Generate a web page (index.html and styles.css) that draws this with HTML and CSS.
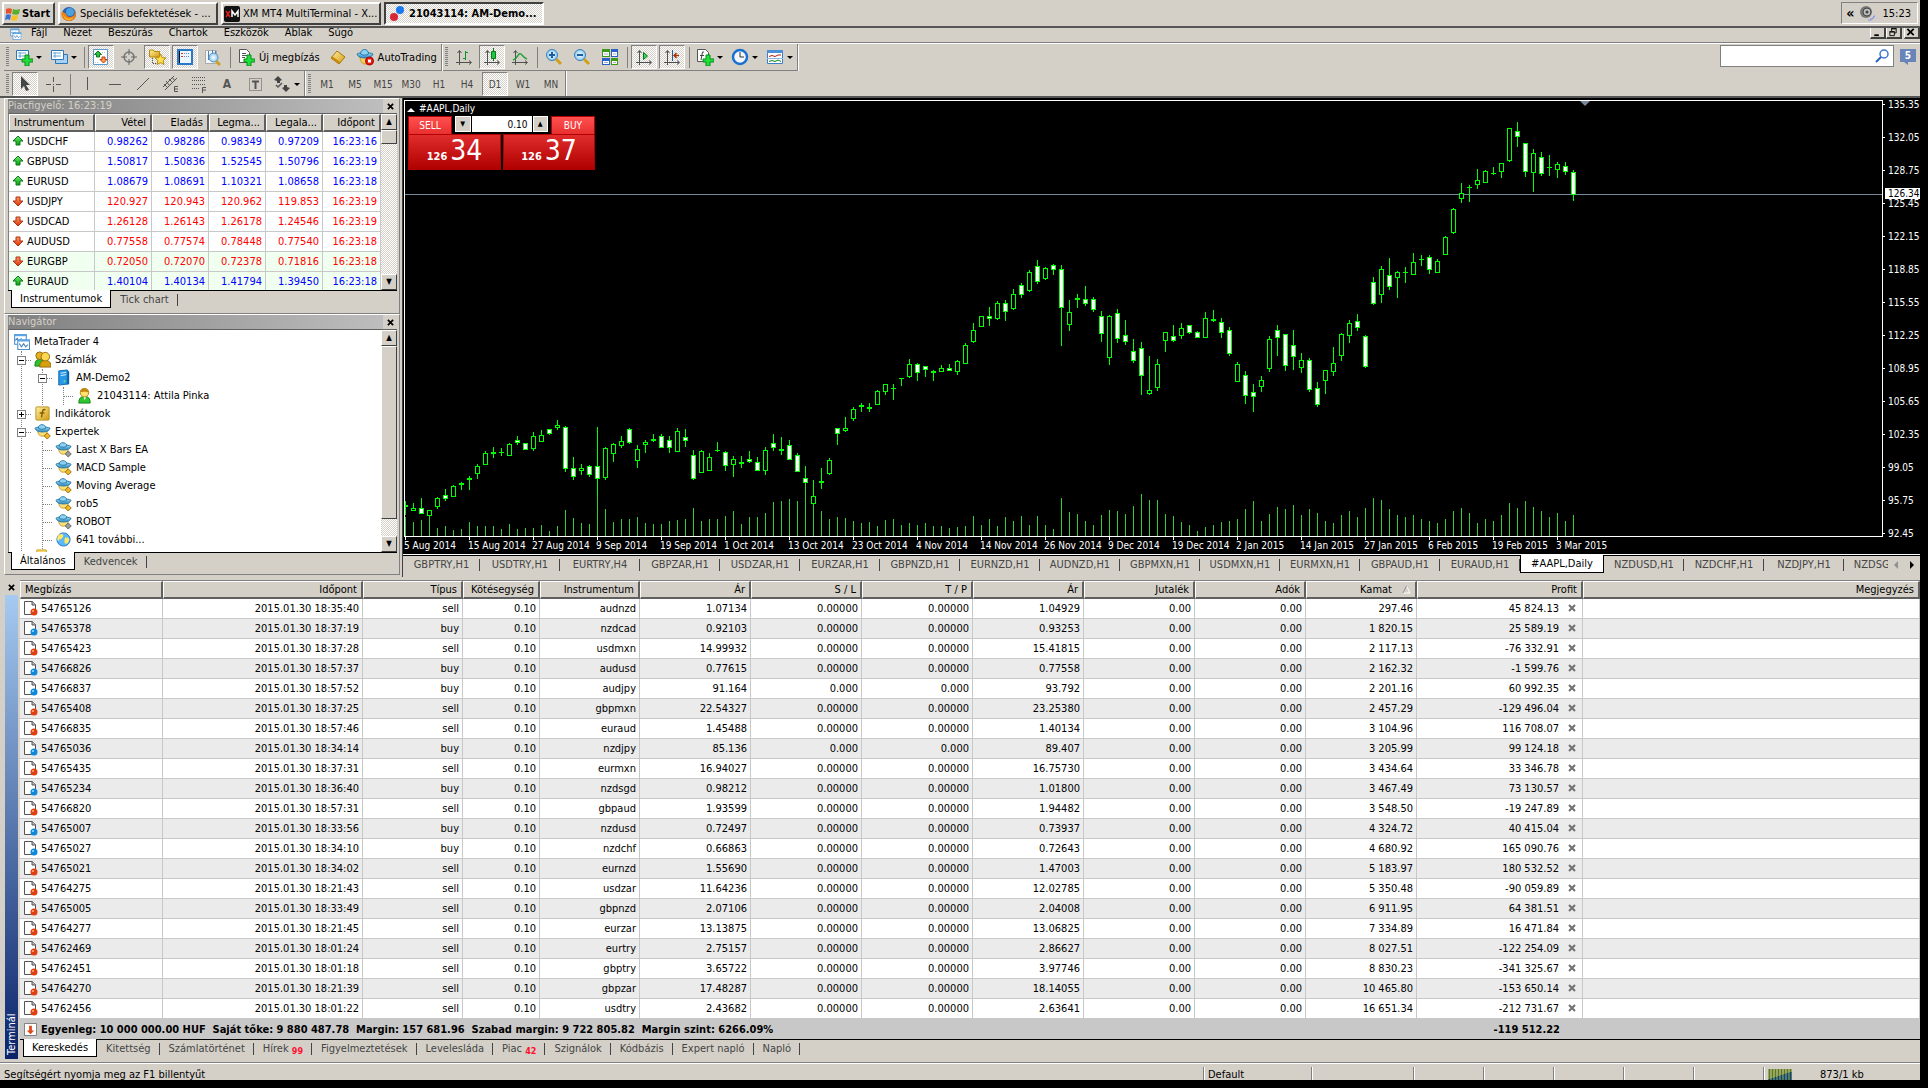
FILE: index.html
```
<!DOCTYPE html>
<html lang="hu">
<head>
  <meta charset="UTF-8">
  <meta name="viewport" content="width=device-width, initial-scale=1.0">
  <title>21043114: AM-Demo2 - MetaTrader 4</title>
  <link rel="stylesheet" href="styles.css">
</head>
<body>

  <!-- Shared icons -->
  <svg class="sprite" aria-hidden="true">
    <defs>
      <linearGradient id="g-hat" x1="0" y1="0" x2="0" y2="1"><stop offset="0" stop-color="#9fdcf8"/><stop offset="1" stop-color="#2a86bd"/></linearGradient>
      <linearGradient id="g-gold" x1="0" y1="0" x2="1" y2="1"><stop offset="0" stop-color="#fff0a0"/><stop offset="1" stop-color="#d49a10"/></linearGradient>
      <linearGradient id="g-green" x1="0" y1="0" x2="0" y2="1"><stop offset="0" stop-color="#6ff06f"/><stop offset="1" stop-color="#0a9a0a"/></linearGradient>
      <linearGradient id="g-red" x1="0" y1="0" x2="0" y2="1"><stop offset="0" stop-color="#ff9a6a"/><stop offset="1" stop-color="#d83000"/></linearGradient>
      <radialGradient id="g-lens"><stop offset="0" stop-color="#ffffff"/><stop offset="1" stop-color="#8cc8f0"/></radialGradient>
    </defs>
    <symbol id="i-x" viewBox="0 0 8 8"><path d="M1 1l6 6M7 1L1 7" stroke="currentColor" stroke-width="2"/></symbol>
    <symbol id="i-up" viewBox="0 0 12 12"><path d="M6 1l5 5H8v4H4V6H1z" fill="url(#g-green)" stroke="#0a7a1e"/></symbol>
    <symbol id="i-down" viewBox="0 0 12 12"><path d="M6 11L1 6h3V2h4v4h3z" fill="url(#g-red)" stroke="#b03010"/></symbol>
    <symbol id="i-windows" viewBox="0 0 16 16"><path d="M1.500 1.500h11v9h-11z" fill="#fff" stroke="#4a90d0"/><path d="M1 1h12v2H1z" fill="#5ca4e4"/><path d="M2 7l2-2 2 3 2-3" fill="none" stroke="#4a80c0"/><path d="M4.500 6.500h11v9h-11z" fill="#fff" stroke="#4a90d0"/><path d="M4 6h12v2H4z" fill="#5ca4e4"/><path d="M6 10l2 3 2-3 2 3 2-2" fill="none" stroke="#4a80c0"/></symbol>
    <symbol id="i-sell" viewBox="0 0 16 16"><path d="M1.500 1.500h8l3 3v10h-11z" fill="#fff" stroke="#555"/><path d="M9 1v4h4" fill="#bbb" stroke="#555"/><circle cx="11" cy="12" r="3.500" fill="#e04010"/><circle cx="10" cy="11" r="1" fill="#ffb090"/></symbol>
    <symbol id="i-buy" viewBox="0 0 16 16"><path d="M1.500 1.500h8l3 3v10h-11z" fill="#fff" stroke="#555"/><path d="M9 1v4h4" fill="#bbb" stroke="#555"/><circle cx="11" cy="12" r="3.500" fill="#1088d8"/><circle cx="10" cy="11" r="1" fill="#a0e0ff"/></symbol>
    <symbol id="i-head" viewBox="0 0 18 18"><path d="M4 8h10c0 4-2 6-5 6s-5-2-5-6z" fill="#fbe07a" stroke="#c89820"/><path d="M1 5.500c3-2 12-2 16 0-1 3-4 4-8 4s-7-1-8-4z" fill="url(#g-hat)" stroke="#2a7aa8"/><path d="M4.500 5.500C4.500.500 12.500.500 12.500 5.500c-2 1.500-6 1.500-8 0z" fill="#8cd0f4" stroke="#2a7aa8"/></symbol>
    <symbol id="i-expert" viewBox="0 0 18 18"><use href="#i-head"/><path d="M14 10.500l3.200 3.200L14 17l-3.200-3.300z" fill="#f0b828" stroke="#9a7008"/></symbol>
    <symbol id="i-expert-off" viewBox="0 0 18 18"><use href="#i-head"/><path d="M14 10.500l3.200 3.200L14 17l-3.200-3.300z" fill="#999" stroke="#666"/></symbol>
    <symbol id="i-user" viewBox="0 0 18 18"><path d="M3 17c0-5 2-7 6-7s6 2 6 7z" fill="#30c830" stroke="#108010"/><path d="M8 10l1 4 2-4z" fill="#fff"/><circle cx="9" cy="6" r="4.500" fill="#ffe070" stroke="#b88010"/><path d="M4.500 5c0-5 9-5 9 1-3-2-6 0-9-1z" fill="#c08810"/></symbol>
    <symbol id="i-plus" viewBox="0 0 18 18"><path d="M10 7h4v4h4v3h-4v4h-4v-4H7v-3h3z" fill="#1ee03a" stroke="#0a8a1a"/></symbol>
    <symbol id="i-axes" viewBox="0 0 18 18"><path d="M4.500 17V3M1 14.500h15M2.500 5l2-2.500 2 2.500M14 12.500l2.500 2-2.500 2" fill="none" stroke="#505050"/></symbol>
  </svg>

  <header class="taskbar">
    <button class="start"><svg viewBox="0 0 16 16"><path d="M1 3c2-1 4-1 6 0L6 8c-2-1-4-1-5 0z" fill="#e8502a"/><path d="M8 3c2 1 4 1 7 0l-1 5c-2 1-4 1-7 0z" fill="#58b030"/><path d="M1 9c1-1 3-1 5 0l-1 5c-2-1-3-1-5 0z" fill="#3a70d8"/><path d="M7 9c2 1 4 1 6 0l-1 5c-2 1-4 1-6 0z" fill="#f8c020"/></svg>Start</button>
    <button class="task"><svg viewBox="0 0 16 16"><circle cx="8" cy="8" r="7" fill="#2a60b0"/><circle cx="9" cy="6" r="4" fill="#4aa0e0"/><path d="M1 5c1 2 3 1 4 3 1 3 4 4 7 2 2-1 2-4 1-6 4 5 1 11-5 11S-1 10 1 5z" fill="#f08010"/><path d="M2 8c2 5 7 6 11 3-3 5-10 4-11-3z" fill="#f8b830"/></svg><span>Speciális befektetések - ...</span></button>
    <button class="task"><svg viewBox="0 0 16 16"><rect width="16" height="16" rx="2" fill="#111"/><path d="M2 5l4 6M6 5l-4 6" stroke="#e02020" stroke-width="1.500"/><path d="M8 11V5l3 4 3-4v6" fill="none" stroke="#fff" stroke-width="1.500"/></svg><span>XM MT4 MultiTerminal - X...</span></button>
    <button class="task active"><svg viewBox="0 0 16 16"><circle cx="10" cy="4" r="4" fill="#1a78f0"/><circle cx="4" cy="11" r="4" fill="#d82838"/></svg><span>21043114: AM-Demo...</span></button>
    <div class="tray"><span>«</span><svg viewBox="0 0 16 16"><circle cx="7" cy="7" r="6" fill="#777"/><circle cx="8" cy="7" r="4" fill="#bbb" stroke="#444"/><circle cx="8" cy="7" r="1.500" fill="#444"/><path d="M11 14c2 0 3-1 4-3M9 15c4 1 6-2 7-5" fill="none" stroke="#8890e8"/></svg><time>15:23</time></div>
  </header>

  <nav class="menubar">
    <svg viewBox="0 0 16 16"><use href="#i-windows"/></svg>
    <a href="#">Fájl</a><a href="#">Nézet</a><a href="#">Beszúrás</a><a href="#">Chartok</a><a href="#">Eszközök</a><a href="#">Ablak</a><a href="#">Súgó</a>
    <div class="winbtns">
      <button aria-label="Kis méret"><svg viewBox="0 0 12 10"><path d="M3 7h5v2H3z"/></svg></button>
      <button aria-label="Előző méret"><svg viewBox="0 0 12 10"><path d="M4.500 3.500v-3h5v5h-2M2.500 4.500h5v4h-5zM4 1h6M2 4h6" fill="none" stroke="#000"/></svg></button>
      <button class="close" aria-label="Bezárás"><svg viewBox="0 0 12 10"><path d="M2 1l7 7M9 1L2 8" stroke="#000" stroke-width="2"/></svg></button>
    </div>
  </nav>

  <div class="toolrow">
    <div class="toolbar">
      <i class="grip"></i>
      <button class="tool drop" aria-label="Új chart"><svg viewBox="0 0 18 18"><path d="M1.500 2.500h12v9h-12z" fill="#fff" stroke="#2a78b8"/><path d="M3 5h8M5 4v6M3 8h8" stroke="#68a8d8"/><use href="#i-plus"/></svg></button>
      <button class="tool drop" aria-label="Profilok"><svg viewBox="0 0 18 18"><path d="M5.500 6.500h12v9h-12z" fill="#a8d0f0" stroke="#2a78b8"/><path d="M1.500 2.500h12v9h-12z" fill="#fff" stroke="#2a78b8"/><path d="M3 5h8M5 4v6M3 8h8" stroke="#68a8d8"/></svg></button>
      <i class="sep"></i>
      <button class="tool on" aria-label="Piacfigyelő"><svg viewBox="0 0 18 18"><path d="M1.500 1.500h14v15h-14z" fill="#fff" stroke="#5a9ad0"/><path d="M3 14.500h4M10 4.500h4" stroke="#a8c8e8" stroke-dasharray="1 1"/><path d="M6 3l3.500 3.500H7.500V9h-3V6.500h-2z" fill="#30c040" stroke="#087a18"/><path d="M11.500 15L8 11.500h2V9h3v2.500h2z" fill="#f8a050" stroke="#c03808"/></svg></button>
      <button class="tool" aria-label="Adatablak"><svg viewBox="0 0 18 18"><circle cx="9" cy="9" r="5" fill="none" stroke="#777" stroke-width="1.500"/><path d="M9 1v6M9 11v6M1 9h6M11 9h6" stroke="#666"/></svg></button>
      <button class="tool on" aria-label="Navigátor"><svg viewBox="0 0 18 18"><path d="M1.500 2h4l1 1.500h5V9h-10z" fill="url(#g-gold)" stroke="#b88808"/><path d="M4.500 10v6M5 15.500h4" stroke="#555" stroke-dasharray="1 1"/><path d="M12.500 6l1.700 3.600 3.800.4-2.800 2.600.8 4-3.500-2-3.500 2 .8-4L7 10l3.800-.4z" fill="#ffe050" stroke="#b88808"/></svg></button>
      <button class="tool on" aria-label="Terminál"><svg viewBox="0 0 18 18"><path d="M2 2h14v14H2z" fill="#eef6ff" stroke="#2a78c8" stroke-width="2"/><path d="M3 3h1v12H3z" fill="#111"/><path d="M5 5.500h2M5 8.500h2" stroke="#e03010"/><path d="M8 5.500h6M8 8.500h6" stroke="#5a8ac8" stroke-dasharray="1 1"/></svg></button>
      <button class="tool" aria-label="Stratégia teszter"><svg viewBox="0 0 18 18"><path d="M1.500 2.500h11v13h-11z" fill="#f4f8fc" stroke="#aaa"/><path d="M4.500 3v9M8.500 2v9M11.500 3v6" stroke="#4a80b0"/><path d="M12 13l4 4" stroke="#d0a020" stroke-width="3"/><circle cx="9.500" cy="9.500" r="4.500" fill="url(#g-lens)" stroke="#5a90b8"/></svg></button>
      <i class="sep"></i>
      <button class="tool wide"><svg viewBox="0 0 18 18"><path d="M2.500 1.500h7l3 3v10h-10z" fill="#fff" stroke="#555"/><path d="M5 5.500h4M5 7.500h5M5 9.500h3" stroke="#555"/><use href="#i-plus"/></svg>Új megbízás</button>
      <button class="tool" aria-label="MetaEditor"><svg viewBox="0 0 18 18"><path d="M2 10l6-7 8 6-6 7z" fill="url(#g-gold)" stroke="#a87808"/><path d="M2 10l8 6 1-2-8-6z" fill="#c88810"/></svg></button>
      <button class="tool wide"><svg viewBox="0 0 18 18"><path d="M4 8h10c0 5-2 8-5 8s-5-3-5-8z" fill="#f8d060" stroke="#c89820"/><path d="M1 6c3-2 12-2 16 0-1 3-4 4-8 4s-7-1-8-4z" fill="url(#g-hat)" stroke="#2a7aa8"/><path d="M4.500 6c0-6 8-6 8 0-2 1.500-6 1.500-8 0z" fill="#8cd0f4" stroke="#2a7aa8"/><circle cx="13.500" cy="13" r="4" fill="#e02010" stroke="#a00"/><path d="M12 11.500h3v3h-3z" fill="#fff"/></svg>AutoTrading</button>
    </div>
    <div class="toolbar">
      <i class="grip"></i>
      <button class="tool" aria-label="Oszlop chart"><svg viewBox="0 0 18 18"><use href="#i-axes"/><path d="M10.500 3v9M8 10.500h2M11 4.500h2" stroke="#109030"/></svg></button>
      <button class="tool on" aria-label="Gyertya chart"><svg viewBox="0 0 18 18"><use href="#i-axes"/><path d="M10.500 0v13" stroke="#087a18"/><path d="M8.500 3.500h4v7h-4z" fill="#20c840" stroke="#087a18"/></svg></button>
      <button class="tool" aria-label="Vonal chart"><svg viewBox="0 0 18 18"><use href="#i-axes"/><path d="M2 12c5-1 5-8 8-6 2 2 3 4 6 5" fill="none" stroke="#20a038" stroke-width="1.500"/></svg></button>
      <i class="sep"></i>
      <button class="tool" aria-label="Nagyítás"><svg viewBox="0 0 18 18"><path d="M11 11l5 5" stroke="#d0a018" stroke-width="3"/><circle cx="7" cy="7" r="5.500" fill="url(#g-lens)" stroke="#3a80b8"/><path d="M4 7h6M7 4v6" stroke="#1a60a0" stroke-width="2"/></svg></button>
      <button class="tool" aria-label="Kicsinyítés"><svg viewBox="0 0 18 18"><path d="M11 11l5 5" stroke="#d0a018" stroke-width="3"/><circle cx="7" cy="7" r="5.500" fill="url(#g-lens)" stroke="#3a80b8"/><path d="M4 7h6" stroke="#1a60a0" stroke-width="2"/></svg></button>
      <button class="tool" aria-label="Mozaik"><svg viewBox="0 0 18 18"><path d="M1 1h8v8H1zM10 10h7v7h-7z" fill="#3a9a18"/><path d="M10 1h7v8h-7zM1 10h8v7H1z" fill="#2a60c8"/><path d="M2 4h6v4H2zM11 4h5v4h-5zM2 13h6v3H2zM11 13h5v3h-5z" fill="#fff"/><path d="M3 6h4M12 6h3M3 14.500h4M12 14.500h3" stroke="#aac"/></svg></button>
      <i class="sep"></i>
      <button class="tool on" aria-label="Automatikus görgetés"><svg viewBox="0 0 18 18"><use href="#i-axes"/><path d="M8.500 4.500l4 3.500-4 3.500z" fill="#40d050" stroke="#087a18"/></svg></button>
      <button class="tool on" aria-label="Chart eltolás"><svg viewBox="0 0 18 18"><use href="#i-axes"/><path d="M9.500 2v11" stroke="#2060a0"/><path d="M16 7.500h-5M13.500 5L11 7.500l2.500 2.500" fill="none" stroke="#b03008" stroke-width="1.500"/></svg></button>
      <i class="sep"></i>
      <button class="tool drop" aria-label="Indikátorok"><svg viewBox="0 0 18 18"><path d="M1.500 1.500h8l3 3v9h-11z" fill="#fff" stroke="#555"/><path d="M8 4H6.500L5 12M4 7.500h4" fill="none" stroke="#444"/><use href="#i-plus"/></svg></button>
      <button class="tool drop" aria-label="Időszakok"><svg viewBox="0 0 18 18"><circle cx="9" cy="9" r="7" fill="#f4f8fc" stroke="#1a70d0" stroke-width="2.500"/><path d="M9 4v5h4" fill="none" stroke="#333"/></svg></button>
      <button class="tool drop" aria-label="Sablonok"><svg viewBox="0 0 18 18"><path d="M1.500 2.500h15v13h-15z" fill="#fff" stroke="#3a80c8"/><path d="M1 2h16v3H1z" fill="#4a90d8"/><path d="M3 8.500l3-1 3 1 3-1.500h3" fill="none" stroke="#b02010"/><path d="M1 10.500h16" stroke="#88b8e8"/><path d="M3 13.500l3-1 3 1 3-1.500 3 1.500" fill="none" stroke="#108020"/></svg></button>
    </div>
    <div class="search">
      <input type="search" aria-label="Keresés">
      <svg viewBox="0 0 14 14"><circle cx="9" cy="5" r="4" fill="#fff" stroke="#3a78d0" stroke-width="1.500"/><path d="M6 8l-5 5" stroke="#2a60c0" stroke-width="2"/></svg>
    </div>
    <button class="mail" aria-label="Üzenetek">5</button>
  </div>

  <div class="toolrow second">
    <div class="toolbar">
      <i class="grip"></i>
      <button class="tool on" aria-label="Kurzor"><svg viewBox="0 0 18 18"><path d="M5 1v13l3-3 2 5 3-1-3-5h4z" fill="#444"/></svg></button>
      <button class="tool" aria-label="Szálkereszt"><svg viewBox="0 0 18 18"><path d="M9.500 2v5M9.500 11v6M2 9.500h5M12 9.500h5M9 9.500h1" stroke="#555"/></svg></button>
      <i class="sep"></i>
      <button class="tool" aria-label="Függőleges vonal"><svg viewBox="0 0 18 18"><path d="M9.500 2v13" stroke="#555"/></svg></button>
      <button class="tool" aria-label="Vízszintes vonal"><svg viewBox="0 0 18 18"><path d="M3 9.500h12" stroke="#555"/></svg></button>
      <button class="tool" aria-label="Trendvonal"><svg viewBox="0 0 18 18"><path d="M3 15L15 3" stroke="#555"/></svg></button>
      <button class="tool" aria-label="Csatorna"><svg viewBox="0 0 18 18"><path d="M1 12L12 1M3 15L15 3M2 9l4 4M4 6l4 5M7 4l4 4M10 2l3 4" stroke="#555"/><path d="M16 11.500h-3.500v5H16M13 14h3" fill="none" stroke="#555"/></svg></button>
      <button class="tool" aria-label="Fibonacci"><svg viewBox="0 0 18 18"><path d="M2 2.500h14M2 5.500h14M2 9.500h14M2 13.500h8" stroke="#555" stroke-dasharray="1 1"/><path d="M16 12.500h-3.500V18M13 15h3" fill="none" stroke="#555"/></svg></button>
      <button class="tool letter">A</button>
      <button class="tool" aria-label="Szövegcímke"><svg viewBox="0 0 18 18"><path d="M3.500 3.500h12v12h-12z" fill="none" stroke="#555" stroke-dasharray="1 1"/><path d="M6 6.500h7M9.500 6v8" stroke="#555" stroke-width="2"/></svg></button>
      <button class="tool drop" aria-label="Nyilak"><svg viewBox="0 0 18 18"><path d="M5 1l4 4-2 1v2H4V6L1 5zM13 17l-4-4 2-1v-2h3v2l3 1z" fill="#444"/><path d="M3 10l2 2 4-4" fill="none" stroke="#555" stroke-width="1.500"/></svg></button>
    </div>
    <div class="toolbar">
      <i class="grip"></i>
      <button class="tool tf">M1</button><button class="tool tf">M5</button><button class="tool tf">M15</button><button class="tool tf">M30</button><button class="tool tf">H1</button><button class="tool tf">H4</button><button class="tool tf on">D1</button><button class="tool tf">W1</button><button class="tool tf">MN</button>
    </div>
  </div>

  <main class="workspace">
    <aside class="side">
      <section class="panel market">
        <h2>Piacfigyelő: 16:23:19 <button aria-label="Bezárás"><svg><use href="#i-x"/></svg></button></h2>
        <div class="view">
          <div class="clip">
            <table class="quotes">
              <thead><tr><th>Instrumentum</th><th>Vétel</th><th>Eladás</th><th>Legma...</th><th>Legala...</th><th>Időpont</th></tr></thead>
              <tbody id="quotes"></tbody>
            </table>
          </div>
          <div class="scroll"><button aria-label="Fel">▲</button><i class="thumb short"></i><button class="end" aria-label="Le">▼</button></div>
        </div>
        <div class="tabs"><button class="active">Instrumentumok</button><button>Tick chart</button></div>
      </section>

      <section class="panel navigator">
        <h2>Navigátor <button aria-label="Bezárás"><svg><use href="#i-x"/></svg></button></h2>
        <div class="view">
          <div class="clip">
            <ul class="tree">
              <li><svg viewBox="0 0 16 16"><use href="#i-windows"/></svg>MetaTrader 4
                <ul>
                  <li><b class="box"></b><svg viewBox="0 0 18 18"><path d="M1 16c0-5 1-7 5-7s5 3 5 7z" fill="#30c030" stroke="#108010"/><circle cx="6" cy="5" r="4" fill="#e8b020" stroke="#906808"/><path d="M6 17c0-5 2-7 6-7s6 2 6 7z" fill="#d8a010" stroke="#906808"/><circle cx="12" cy="6" r="4.500" fill="#ffd850" stroke="#906808"/></svg>Számlák
                    <ul><li><b class="box"></b><svg viewBox="0 0 18 18"><path d="M4 2l9-1v15l-9 1z" fill="#2a98e8" stroke="#1068b0"/><path d="M6 4.500l6-1M6 7l6-1" stroke="#d8f0ff"/><path d="M13 1l2 2v13l-2 1z" fill="#0a60a8"/><circle cx="10" cy="13" r="1" fill="#60f060"/></svg>AM-Demo2
                      <ul><li><svg viewBox="0 0 18 18"><use href="#i-user"/></svg>21043114: Attila Pinka</li></ul>
                    </li></ul>
                  </li>
                  <li><b class="box plus"></b><svg viewBox="0 0 18 18"><rect x="2" y="2" width="14" height="14" rx="1" fill="url(#g-gold)" stroke="#b89020"/><path d="M12 5c-3-1-3 1-4 8M6 8.500h5" fill="none" stroke="#806000" stroke-width="1.500"/></svg>Indikátorok</li>
                  <li><b class="box"></b><svg viewBox="0 0 18 18"><use href="#i-expert"/></svg>Expertek
                    <ul>
                      <li><svg viewBox="0 0 18 18"><use href="#i-expert-off"/></svg>Last X Bars EA</li>
                      <li><svg viewBox="0 0 18 18"><use href="#i-expert"/></svg>MACD Sample</li>
                      <li><svg viewBox="0 0 18 18"><use href="#i-expert"/></svg>Moving Average</li>
                      <li><svg viewBox="0 0 18 18"><use href="#i-expert"/></svg>rob5</li>
                      <li><svg viewBox="0 0 18 18"><use href="#i-expert-off"/></svg>ROBOT</li>
                      <li><svg viewBox="0 0 18 18"><circle cx="9" cy="9" r="7" fill="#58b8f8" stroke="#2a78c0"/><path d="M4 4c4-2 6 0 4 3s-3 1-4 3-3-3 0-6zM11 7c4-1 5 2 3 5s-4 1-4-1 0-3 1-4z" fill="#ffe860"/></svg>641 további...</li>
                    </ul>
                  </li>
                  <li class="more"><svg viewBox="0 0 18 18"><path d="M3 1h10v6H3z" fill="#f8d868" stroke="#c8a020"/></svg></li>
                </ul>
              </li>
            </ul>
          </div>
          <div class="scroll"><button aria-label="Fel">▲</button><i class="thumb long"></i><button class="end" aria-label="Le">▼</button></div>
        </div>
        <div class="tabs"><button class="active">Általános</button><button>Kedvencek</button></div>
      </section>
    </aside>

    <section class="charts">
      <div class="chart">
        <div class="plot">
          <svg id="plot" role="img" aria-label="#AAPL,Daily gyertya chart"></svg>
          <div class="symbol">#AAPL,Daily</div>
          <div class="oneclick">
            <button class="sell">SELL</button>
            <div class="lot"><button aria-label="Kevesebb">▼</button><input type="text" value="0.10" aria-label="Lot"><button aria-label="Több">▲</button></div>
            <button class="buy">BUY</button>
            <button class="price"><small>126</small>34</button>
            <button class="price"><small>126</small>37</button>
          </div>
        </div>
        <div class="scale" id="scale"><span class="bid">126.34</span></div>
        <div class="dates" id="dates"></div>
      </div>
      <div class="charttabs">
        <div class="list" id="charttabs"></div>
        <button class="arrow dim" aria-label="Balra"><svg viewBox="0 0 8 8"><path d="M6 0v8L2 4z"/></svg></button>
        <button class="arrow" aria-label="Jobbra"><svg viewBox="0 0 8 8"><path d="M2 0v8l4-4z"/></svg></button>
      </div>
    </section>
  </main>

  <section class="terminal">
    <div class="strip"><button aria-label="Bezárás"><svg><use href="#i-x"/></svg></button><span>Terminál</span></div>
    <div class="trade">
      <table class="orders">
        <colgroup><col class="c-id"><col class="c-time"><col class="c-type"><col class="c-lot"><col class="c-type"><col class="c-num"><col class="c-num"><col class="c-num"><col class="c-num"><col class="c-num"><col class="c-num"><col class="c-num"><col class="c-profit"><col></colgroup>
        <thead><tr><th>Megbízás</th><th>Időpont</th><th>Típus</th><th>Kötésegység</th><th>Instrumentum</th><th>Ár</th><th>S / L</th><th>T / P</th><th>Ár</th><th>Jutalék</th><th>Adók</th><th class="sorted"><svg viewBox="0 0 9 9"><path d="M4.500 1L8 8H1z" fill="none" stroke="#fff"/><path d="M1 8l3.500-7" stroke="#808080"/></svg>Kamat</th><th>Profit</th><th>Megjegyzés</th></tr></thead>
        <tbody id="orders"></tbody>
        <tfoot><tr><td colspan="12"><svg viewBox="0 0 14 14"><path d="M.500.500h13v13H.500z" fill="#fff" stroke="#777"/><path d="M7 12L3 8h2.500V3h3v5H11z" fill="#e04818"/></svg>Egyenleg: 10 000 000.00 HUF&nbsp; Saját tőke: 9 880 487.78&nbsp; Margin: 157 681.96&nbsp; Szabad margin: 9 722 805.82&nbsp; Margin szint: 6266.09%</td><td class="total">-119 512.22</td><td></td></tr></tfoot>
      </table>
      <div class="tabs"><button class="active">Kereskedés</button><button>Kitettség</button><button>Számlatörténet</button><button>Hírek <sub>99</sub></button><button>Figyelmeztetések</button><button>Levelesláda</button><button>Piac <sub>42</sub></button><button>Szignálok</button><button>Kódbázis</button><button>Expert napló</button><button>Napló</button></div>
    </div>
  </section>

  <footer class="status">
    <span class="hint">Segítségért nyomja meg az F1 billentyűt</span>
    <span class="s-profile">Default</span><span class="s-wide"></span><span></span><span></span><span></span><span></span><span></span>
    <span class="s-net"><svg viewBox="0 0 24 12"><path d="M1.500 0v12M4.500 0v12M7.500 0v12M10.500 0v12M13.500 0v12M16.500 0v12M19.500 0v12M22.500 0v12" stroke="#5a7a10" stroke-width="2"/><path d="M1.500 10v2M4.500 9v3M7.500 8v4M10.500 7v5M13.500 6v6M16.500 5v7M19.500 4v8M22.500 3v9" stroke="#104868" stroke-width="2"/></svg>873/1 kb</span>
  </footer>

  <script src="script.js"></script>
</body>
</html>
```
FILE: styles.css
```
* {
  box-sizing: border-box;
}
body {
  margin: 0;
  padding: 0 8px 8px 0;
  height: 100vh;
  display: flex;
  flex-direction: column;
  background-color: #000;
  color: #000;
  font-family: "DejaVu Sans Condensed", "Liberation Sans", sans-serif;
  font-size: 11px;
  overflow: hidden;
}
button, input {
  font: inherit;
  color: inherit;
  padding: 0;
  border: none;
  background: none;
}
svg {
  display: block;
  flex: none;
}
.sprite {
  position: absolute;
  width: 0;
  height: 0;
}

/* Taskbar */
.taskbar {
  display: flex;
  gap: 3px;
  padding: 2px;
  height: 28px;
  background-color: #d4d0c8;
  border-bottom: 2px solid #555;
}
.taskbar svg {
  width: 16px;
  height: 16px;
}
.start, .task {
  display: flex;
  align-items: center;
  gap: 3px;
  height: 23px;
  padding: 0 1px;
  border: 2px solid;
  border-color: #fff #404040 #404040 #fff;
  white-space: nowrap;
}
.start {
  min-width: 53px;
  gap: 1px;
  font-weight: bold;
}
.task {
  min-width: 160px;
}
.task.active, .tool.on {
  background: repeating-conic-gradient(#fff 0 25%, #d4d0c8 0 50%) 0 0 / 2px 2px;
  border-color: #808080 #fff #fff #808080;
}
.task.active {
  padding-left: 4px;
  border-color: #404040 #fff #fff #404040;
  font-weight: bold;
}
.tray {
  display: flex;
  align-items: center;
  gap: 5px;
  margin-left: auto;
  height: 22px;
  padding: 0 6px 0 4px;
  border: 1px solid;
  border-color: #808080 #fff #fff #808080;
}
.tray span {
  font-size: 14px;
  font-weight: bold;
}
.tray time {
  padding-left: 2px;
}

/* Menu */
.menubar {
  display: flex;
  height: 16px;
  padding-left: 8px;
  background-color: #d4d0c8;
  border-bottom: 1px solid #fff;
  box-shadow: inset 0 -1px #808080;
  overflow: hidden;
  line-height: 10px;
}
.menubar svg {
  width: 15px;
  height: 12px;
}
.menubar a {
  margin-left: 8px;
  margin-right: 8px;
  color: #000;
  text-decoration: none;
}
.winbtns {
  display: flex;
  margin-left: auto;
}
.winbtns button {
  height: 11px;
  width: 16px;
  border: solid;
  border-width: 0 2px 2px 1px;
  border-color: #fff #404040 #404040 #fff;
}
.winbtns .close {
  margin-left: 2px;
}
.winbtns svg {
  width: 12px;
  height: 9px;
}

/* Toolbars */
.toolrow {
  display: flex;
  height: 27px;
  padding-left: 4px;
  background-color: #d4d0c8;
}
.toolrow.second {
  border-bottom: 2px solid #555;
}
.toolbar {
  display: flex;
  align-items: center;
  border-right: 1px solid #808080;
  border-bottom: 1px solid #808080;
  box-shadow: 1px 1px #fff;
  margin-right: 1px;
}
.second .toolbar {
  padding-top: 1px;
  border-bottom: none;
  box-shadow: 1px 0 #fff;
}
.grip {
  width: 3px;
  height: 20px;
  margin: 0 2px;
  background: repeating-linear-gradient(#808080 0 1px, #d4d0c8 1px 2px);
}
.sep {
  width: 1px;
  height: 21px;
  margin: 0 2px 0 3px;
  background-color: #808080;
}
.tool {
  display: flex;
  align-items: center;
  justify-content: center;
  width: 26px;
  height: 24px;
  margin: 0 1px;
  border: 1px solid transparent;
}
.tool svg {
  width: 18px;
  height: 18px;
}
.tool.drop {
  width: 33px;
  gap: 3px;
}
.tool.drop::after {
  content: "";
  border: 3px solid transparent;
  border-top-color: #000;
  border-bottom: none;
}
.tool.wide {
  width: auto;
  gap: 4px;
  padding: 0 2px;
}
.tool.tf {
  color: #444;
  font-size: 10px;
}
.tool.letter {
  color: #555;
  font-size: 12px;
  font-weight: bold;
}
.search {
  display: flex;
  align-items: center;
  width: 174px;
  height: 22px;
  margin: 1px 0 0 auto;
  padding-right: 4px;
  background-color: #fff;
  border: 1px solid #808080;
}
.search input {
  flex: 1;
  min-width: 0;
  outline: none;
}
.search svg {
  width: 14px;
  height: 14px;
}
.mail {
  position: relative;
  width: 16px;
  height: 13px;
  margin: 5px 4px 0 6px;
  background-color: #6884b8;
  color: #fff;
  font-weight: bold;
  font-size: 10px;
  line-height: 13px;
}
.mail::after {
  content: "";
  position: absolute;
  left: 4px;
  top: 13px;
  border-left: 4px solid transparent;
  border-top: 3px solid #6884b8;
}

/* Workspace */
.workspace {
  flex: 1;
  min-height: 0;
  display: flex;
  background-color: #d4d0c8;
}
.side {
  display: flex;
  flex-direction: column;
  width: 402px;
  padding: 0 2px 2px 4px;
  flex: none;
}
.panel {
  display: flex;
  flex-direction: column;
  padding: 0 2px 3px 3px;
  border: 1px solid;
  border-color: #fff #808080 #808080 #fff;
}
.market {
  flex: none;
  height: 216px;
}
.navigator {
  flex: 1;
  min-height: 0;
  padding-bottom: 2px;
}
.panel h2 {
  display: flex;
  justify-content: space-between;
  margin: 0;
  height: 14px;
  flex: none;
  color: #d4d0c8;
  font-size: 11px;
  font-weight: normal;
  line-height: 13px;
  background: linear-gradient(90deg, #808080, #c0c0c0);
}
.panel h2 button {
  display: flex;
  align-items: center;
  justify-content: center;
  width: 14px;
  color: #000;
  background-color: #d4d0c8;
}
.panel h2 svg, .strip svg {
  width: 7px;
  height: 7px;
}
.view {
  flex: 1;
  min-height: 0;
  display: flex;
  background-color: #fff;
  border-top: 1px solid #606060;
  border-left: 1px solid #808080;
}
.clip {
  flex: 1;
  overflow: hidden;
}
.scroll {
  display: flex;
  flex-direction: column;
  width: 16px;
  background: repeating-conic-gradient(#fff 0 25%, #d4d0c8 0 50%) 0 0 / 2px 2px;
}
.scroll button, .thumb {
  height: 16px;
  background-color: #d4d0c8;
  border: 1px solid;
  border-color: #fff #404040 #404040 #fff;
  font-size: 8px;
  line-height: 12px;
}
.scroll .end {
  margin-top: auto;
}
.thumb.short {
  height: 14px;
}
.thumb.long {
  flex: 0 1 173px;
}

table {
  width: 100%;
  border-collapse: separate;
  border-spacing: 0;
  table-layout: fixed;
}
th {
  height: 18px;
  padding: 0 4px;
  background-color: #d4d0c8;
  border: solid;
  border-width: 1px 2px 2px 1px;
  border-color: #fff #606060 #606060 #fff;
  font-weight: normal;
  line-height: 15px;
  text-align: right;
  white-space: nowrap;
}
td {
  height: 20px;
  padding: 0 3px;
  border-right: 1px solid #c8c8c8;
  border-bottom: 1px solid #c8c8c8;
  line-height: 19px;
  text-align: right;
  white-space: nowrap;
}
th:first-child, td:first-child {
  text-align: left;
}
.quotes th:first-child {
  width: 86px;
}
.quotes th {
  width: 57px;
}
.quotes th:last-child {
  width: auto;
}
.quotes td svg {
  float: left;
  width: 12px;
  height: 12px;
  margin: 3px 3px 0 0;
}
.quotes .rise {
  color: #0000ff;
}
.quotes .fall {
  color: #ff0000;
}
.quotes td:first-child {
  color: #000;
}
.quotes .tint td {
  background-color: #f0fff0;
}

/* Tree */
.tree, .tree ul {
  list-style: none;
  margin: 0;
  padding: 0;
}
.tree {
  padding: 3px 0 0 4px;
}
.tree ul {
  margin-left: 8px;
  border-left: 1px dotted #808080;
}
.tree li {
  line-height: 18px;
  white-space: nowrap;
}
.tree li li {
  padding-left: 12px;
  background: repeating-linear-gradient(90deg, #808080 0 1px, transparent 1px 2px) 0 9px / 10px 1px no-repeat;
}
.tree li svg {
  float: left;
  width: 17px;
  height: 17px;
  margin-right: 4px;
}
.tree li ul {
  clear: left;
}
.tree .more {
  height: 18px;
}
.box {
  float: left;
  width: 9px;
  height: 9px;
  margin: 5px 8px 0 -17px;
  background: linear-gradient(#000, #000) center / 5px 1px no-repeat #fff;
  border: 1px solid #808080;
}
.box.plus {
  background: linear-gradient(#000, #000) center / 5px 1px no-repeat, linear-gradient(#000, #000) center / 1px 5px no-repeat #fff;
}

/* Tabs */
.tabs {
  display: flex;
  flex: none;
  height: 20px;
  padding-left: 3px;
  border-top: 1px solid #000;
}
.tabs button {
  position: relative;
  height: 17px;
  padding: 0 9px;
  color: #444;
  white-space: nowrap;
}
.tabs button:not(.active)::after {
  content: "";
  position: absolute;
  right: 0;
  top: 3px;
  height: 12px;
  border-right: 1px solid #444;
}
.tabs .active {
  height: 18px;
  margin-top: -1px;
  padding: 0 8px;
  background-color: #fff;
  border: 1px solid #000;
  border-top: none;
  color: #000;
}
.tabs sub {
  color: #ff1030;
  font-size: 9px;
  font-weight: bold;
  line-height: 8px;
  vertical-align: -2px;
}

/* Chart */
.charts {
  flex: 1;
  min-width: 0;
  display: flex;
  flex-direction: column;
  border-left: 1px solid #404040;
}
.chart {
  flex: 1;
  min-height: 0;
  display: grid;
  grid-template-columns: 1fr 37px;
  grid-template-rows: 1fr 17px;
  padding: 2px 0 0 1px;
  background-color: #000;
  color: #fff;
  font-size: 10px;
}
.plot {
  position: relative;
  min-height: 0;
  border: 1px solid #fff;
}
#plot {
  position: absolute;
  inset: 0;
  width: 100%;
  height: 100%;
}
.symbol {
  position: absolute;
  left: 2px;
  top: 1px;
  line-height: 13px;
}
.symbol::before {
  content: "";
  display: inline-block;
  margin-right: 4px;
  border: 4px solid transparent;
  border-bottom-color: #fff;
  border-top: none;
}
.oneclick {
  position: absolute;
  left: 3px;
  top: 15px;
  display: grid;
  grid-template-columns: 44px 48px 48px 44px;
  grid-template-rows: 18px 36px;
  column-gap: 1px;
  color: #fff;
}
.oneclick .sell, .oneclick .buy {
  background: linear-gradient(#ff5050, #e83030);
  border: 1px solid #b00000;
  border-bottom: none;
}
.oneclick .price {
  grid-column: span 2;
  background: linear-gradient(#e02c2c, #b00000);
  border: 1px solid #b00000;
  font-size: 28px;
  line-height: 32px;
}
.price + .price {
  margin-left: 1px;
}
.price small {
  margin-right: 3px;
  font-size: 11px;
  font-weight: bold;
}
.lot {
  grid-column: span 2;
  display: flex;
  justify-content: center;
  gap: 1px;
  margin: 0 2px;
  height: 16px;
  color: #000;
}
.lot input {
  width: 60px;
  background-color: #fff;
  text-align: right;
  padding-right: 4px;
}
.lot button {
  width: 16px;
  background-color: #d4d0c8;
  border: 1px solid #fff;
  font-size: 7px;
}
.scale {
  position: relative;
  display: flex;
  flex-direction: column;
  min-height: 0;
  margin-top: -1px;
}
.scale span {
  flex: none;
  height: 33px;
  padding-left: 5px;
  line-height: 11px;
}
.scale .tick:last-child {
  height: 11px;
}
.scale .tick::before {
  content: "";
  float: left;
  width: 2px;
  margin: 5px 3px 0 -5px;
  border-top: 1px solid #fff;
}
.scale .bid {
  position: absolute;
  left: 2px;
  top: 89px;
  height: 11px;
  padding: 0 1px 0 3px;
  background-color: #fff;
  color: #000;
}
.dates {
  grid-column: span 2;
  display: flex;
  overflow: hidden;
}
.dates span {
  flex: none;
  width: 64px;
  padding-top: 1px;
  line-height: 15px;
  white-space: nowrap;
  background: linear-gradient(#fff, #fff) 1px 0 / 1px 3px no-repeat;
}
.charttabs {
  display: flex;
  height: 23px;
  border-top: 1px solid #fff;
  box-shadow: inset 0 1px #000;
}
.charttabs .list {
  flex: 1;
  min-width: 0;
  display: flex;
  overflow: hidden;
}
.charttabs .list button {
  flex: none;
  width: 80px;
  height: 18px;
  color: #444;
  background: linear-gradient(#444, #444) right 4px / 1px 12px no-repeat;
}
.charttabs .list button:first-child {
  width: 77px;
}
.charttabs .list .active {
  width: 84px;
  color: #000;
  background: #fff;
  border: 1px solid #000;
  border-top: none;
}
.charttabs .arrow {
  display: flex;
  align-items: center;
  justify-content: center;
  width: 16px;
  height: 20px;
}
.charttabs svg {
  width: 8px;
  height: 8px;
  fill: #000;
}
.charttabs .dim svg {
  fill: #909090;
}

/* Terminal */
.terminal {
  display: flex;
  flex: none;
  padding: 3px 0 3px 5px;
  background-color: #d4d0c8;
  border-bottom: 1px solid #808080;
}
.strip {
  display: flex;
  flex-direction: column;
  width: 13px;
  margin-right: 2px;
}
.strip button {
  display: flex;
  align-items: center;
  justify-content: center;
  height: 15px;
}
.strip span {
  flex: 1;
  padding-top: 4px;
  background: linear-gradient(#0a246a, #a6caf0);
  color: #fff;
  line-height: 13px;
  writing-mode: vertical-rl;
  transform: rotate(180deg);
}
.trade {
  flex: 1;
  min-width: 0;
}
.orders {
  border-top: 1px solid #808080;
  background-color: #fff;
}
.c-id {
  width: 143px;
}
.c-time {
  width: 200px;
}
.c-type {
  width: 100px;
}
.c-lot {
  width: 77px;
}
.c-num {
  width: 111px;
}
.c-profit {
  width: 166px;
}
.sorted svg {
  float: right;
  width: 9px;
  height: 9px;
  margin: 3px 0 0 10px;
}
.orders tbody tr:nth-child(even) {
  background-color: #ebebeb;
}
.orders td svg {
  float: left;
  width: 16px;
  height: 16px;
  margin: 1px 2px 0 0;
}
.orders td button {
  float: right;
  width: 14px;
  height: 18px;
  margin-left: 6px;
  color: #707070;
}
.orders td button svg {
  float: none;
  width: 8px;
  height: 8px;
  margin: 0 auto;
}
.orders tfoot td {
  background-color: #c8c8c8;
  border: none;
  font-weight: bold;
}
.orders tfoot svg {
  width: 13px;
  height: 13px;
  margin: 3px 4px 0 1px;
}
.orders .total {
  padding-right: 23px;
}

/* Status bar */
.status {
  display: flex;
  flex: none;
  height: 17px;
  padding-top: 3px;
  overflow: hidden;
  background-color: #d4d0c8;
  border-top: 1px solid #fff;
  line-height: 15px;
}
.status span {
  width: 70px;
  padding-left: 4px;
  border-left: 1px solid #808080;
  box-shadow: inset 1px 0 #fff;
}
.status .hint {
  flex: 1;
  border: none;
  box-shadow: none;
}
.status .s-profile {
  width: 108px;
}
.status .s-wide {
  width: 102px;
}
.status .s-net {
  display: flex;
  gap: 28px;
  width: 157px;
}
.s-net svg {
  width: 24px;
  height: 12px;
  margin-top: 2px;
}
```
FILE: script.js
```
const NS = 'http://www.w3.org/2000/svg';

// symbol, bid, ask, high, low, time, direction
const quotes = [
  ['USDCHF', '0.98262', '0.98286', '0.98349', '0.97209', '16:23:16', 'up'],
  ['GBPUSD', '1.50817', '1.50836', '1.52545', '1.50796', '16:23:19', 'up'],
  ['EURUSD', '1.08679', '1.08691', '1.10321', '1.08658', '16:23:18', 'up'],
  ['USDJPY', '120.927', '120.943', '120.962', '119.853', '16:23:19', 'down'],
  ['USDCAD', '1.26128', '1.26143', '1.26178', '1.24546', '16:23:19', 'down'],
  ['AUDUSD', '0.77558', '0.77574', '0.78448', '0.77540', '16:23:18', 'down'],
  ['EURGBP', '0.72050', '0.72070', '0.72378', '0.71816', '16:23:18', 'down'],
  ['EURAUD', '1.40104', '1.40134', '1.41794', '1.39450', '16:23:18', 'up']
];

document.getElementById('quotes').innerHTML = quotes.map((q, i) => {
  const cls = (q[6] === 'up' ? 'rise' : 'fall');
  return `<tr class="${i > 5 ? 'tint' : ''}">` +
    `<td><svg><use href="#i-${q[6]}"/></svg>${q[0]}</td>` +
    q.slice(1, 6).map(v => `<td class="${cls}">${v}</td>`).join('') + '</tr>';
}).join('');

// ticket, time, type, symbol, open price, current price, swap, profit
const orders = [
  ['54765126', '18:35:40', 'sell', 'audnzd', '1.07134', '1.04929', '297.46', '45 824.13'],
  ['54765378', '18:37:19', 'buy', 'nzdcad', '0.92103', '0.93253', '1 820.15', '25 589.19'],
  ['54765423', '18:37:28', 'sell', 'usdmxn', '14.99932', '15.41815', '2 117.13', '-76 332.91'],
  ['54766826', '18:57:37', 'buy', 'audusd', '0.77615', '0.77558', '2 162.32', '-1 599.76'],
  ['54766837', '18:57:52', 'buy', 'audjpy', '91.164', '93.792', '2 201.16', '60 992.35'],
  ['54765408', '18:37:25', 'sell', 'gbpmxn', '22.54327', '23.25380', '2 457.29', '-129 496.04'],
  ['54766835', '18:57:46', 'sell', 'euraud', '1.45488', '1.40134', '3 104.96', '116 708.07'],
  ['54765036', '18:34:14', 'buy', 'nzdjpy', '85.136', '89.407', '3 205.99', '99 124.18'],
  ['54765435', '18:37:31', 'sell', 'eurmxn', '16.94027', '16.75730', '3 434.64', '33 346.78'],
  ['54765234', '18:36:40', 'buy', 'nzdsgd', '0.98212', '1.01800', '3 467.49', '73 130.57'],
  ['54766820', '18:57:31', 'sell', 'gbpaud', '1.93599', '1.94482', '3 548.50', '-19 247.89'],
  ['54765007', '18:33:56', 'buy', 'nzdusd', '0.72497', '0.73937', '4 324.72', '40 415.04'],
  ['54765027', '18:34:10', 'buy', 'nzdchf', '0.66863', '0.72643', '4 680.92', '165 090.76'],
  ['54765021', '18:34:02', 'sell', 'eurnzd', '1.55690', '1.47003', '5 183.97', '180 532.52'],
  ['54764275', '18:21:43', 'sell', 'usdzar', '11.64236', '12.02785', '5 350.48', '-90 059.89'],
  ['54765005', '18:33:49', 'sell', 'gbpnzd', '2.07106', '2.04008', '6 911.95', '64 381.51'],
  ['54764277', '18:21:45', 'sell', 'eurzar', '13.13875', '13.06825', '7 334.89', '16 471.84'],
  ['54762469', '18:01:24', 'sell', 'eurtry', '2.75157', '2.86627', '8 027.51', '-122 254.09'],
  ['54762451', '18:01:18', 'sell', 'gbptry', '3.65722', '3.97746', '8 830.23', '-341 325.67'],
  ['54764270', '18:21:39', 'sell', 'gbpzar', '17.48287', '18.14055', '10 465.80', '-153 650.14'],
  ['54762456', '18:01:22', 'sell', 'usdtry', '2.43682', '2.63641', '16 651.34', '-212 731.67']
];

document.getElementById('orders').innerHTML = orders.map(o => {
  const zero = o[3].endsWith('jpy') ? '0.000' : '0.00000';
  return `<tr><td><svg><use href="#i-${o[2]}"/></svg>${o[0]}</td><td>2015.01.30 ${o[1]}</td>` +
    `<td>${o[2]}</td><td>0.10</td><td>${o[3]}</td><td>${o[4]}</td><td>${zero}</td><td>${zero}</td>` +
    `<td>${o[5]}</td><td>0.00</td><td>0.00</td><td>${o[6]}</td>` +
    `<td><button aria-label="Zárás"><svg><use href="#i-x"/></svg></button>${o[7]}</td><td></td></tr>`;
}).join('');

// Chart tabs
const charts = ['GBPTRY,H1', 'USDTRY,H1', 'EURTRY,H4', 'GBPZAR,H1', 'USDZAR,H1', 'EURZAR,H1', 'GBPNZD,H1',
  'EURNZD,H1', 'AUDNZD,H1', 'GBPMXN,H1', 'USDMXN,H1', 'EURMXN,H1', 'GBPAUD,H1', 'EURAUD,H1', '#AAPL,Daily',
  'NZDUSD,H1', 'NZDCHF,H1', 'NZDJPY,H1', 'NZDSGD,H1'];
document.getElementById('charttabs').innerHTML = charts.map(c =>
  `<button class="${c[0] === '#' ? 'active' : ''}">${c}</button>`).join('');

// Price scale and dates
const scale = document.getElementById('scale');
for (let i = 0; i < 14; i++) {
  const s = document.createElement('span');
  s.className = 'tick';
  s.textContent = (135.35 - i * 3.3).toFixed(2);
  scale.appendChild(s);
}
const dates = ['5 Aug 2014', '15 Aug 2014', '27 Aug 2014', '9 Sep 2014', '19 Sep 2014', '1 Oct 2014', '13 Oct 2014',
  '23 Oct 2014', '4 Nov 2014', '14 Nov 2014', '26 Nov 2014', '9 Dec 2014', '19 Dec 2014', '2 Jan 2015',
  '14 Jan 2015', '27 Jan 2015', '6 Feb 2015', '19 Feb 2015', '3 Mar 2015'];
document.getElementById('dates').innerHTML = dates.map(d => `<span>${d}</span>`).join('');

// Candles: high, low, body top, body bottom, falling, top of the volume bar
const candles = [
  [501,515,505,506,1,517],[503,510,508,510,0,522],[498,514,508,513,1,520],[510,516,510,515,0,515],
  [497,509,498,506,0,528],[489,501,495,498,1,526],[485,497,486,496,0,530],[482,490,483,484,0,529],
  [476,490,478,479,0,522],[464,479,466,473,0,526],[451,465,453,464,0,526],[447,458,452,453,0,526],
  [448,456,452,452,0,529],[443,456,444,455,0,524],[436,445,440,442,1,529],[443,449,443,449,1,528],
  [432,451,436,448,0,528],[430,442,435,441,0,525],[429,435,429,433,1,531],[420,430,425,427,0,526],
  [426,472,427,468,1,510],[457,480,468,476,1,518],[464,475,468,470,0,523],[465,477,466,474,1,524],
  [427,495,466,478,1,495],[447,480,448,477,0,509],[443,462,444,453,0,522],[436,448,441,445,0,519],
  [428,444,429,442,1,519],[445,468,449,460,0,517],[440,453,442,444,0,523],[434,442,439,440,0,524],
  [434,447,436,447,1,524],[436,453,440,447,1,521],[428,452,431,451,0,520],[429,447,437,440,1,519],
  [450,480,455,478,1,508],[450,473,451,472,0,521],[453,471,457,470,0,519],[442,452,450,450,0,519],
  [451,471,452,465,1,516],[456,477,459,464,0,511],[456,468,462,463,0,524],[451,463,459,461,1,517],
  [457,470,462,470,1,517],[447,475,450,470,0,513],[434,451,443,447,1,502],[437,455,449,450,0,501],
  [440,460,445,459,1,499],[453,472,455,471,1,501],[466,482,478,482,1,483],[480,505,496,503,0,505],
  [468,489,481,482,0,511],[458,475,460,473,0,519],[428,445,428,433,1,517],[417,432,428,430,0,518],
  [407,421,409,418,0,521],[403,412,405,406,0,523],[403,412,407,408,0,522],[390,405,391,404,0,526],
  [384,395,384,391,0,520],[384,400,388,388,0,519],[378,386,378,378,0,525],[359,378,364,376,0,523],
  [363,381,364,372,1,525],[366,377,366,369,1,523],[370,381,371,372,0,526],[365,372,368,371,0,526],
  [364,371,368,370,1,528],[360,375,361,371,0,527],[343,364,345,363,0,526],[323,343,330,341,0,516],
  [316,327,316,326,0,525],[307,326,316,318,1,519],[301,320,303,318,0,526],[300,321,303,311,1,517],
  [289,310,294,308,0,521],[283,298,285,294,1,516],[270,292,272,290,0,525],[260,284,266,281,1,516],
  [267,280,268,278,0,525],[264,275,265,269,1,529],[265,346,269,307,1,498],[300,331,312,324,0,512],
  [294,308,298,299,0,514],[286,306,299,303,1,521],[297,312,299,309,1,525],[311,342,316,333,1,515],
  [315,365,316,357,0,510],[309,343,313,338,1,511],[320,345,335,341,1,514],[339,363,351,360,1,506],
  [342,395,348,375,1,494],[356,395,390,393,0,500],[359,391,364,387,0,500],[332,352,332,340,0,514],
  [325,342,336,340,1,516],[323,339,328,335,0,522],[325,334,325,332,1,525],[331,338,332,337,1,531],
  [312,338,318,337,0,527],[310,322,319,320,0,525],[318,338,322,332,1,522],[327,356,330,353,1,521],
  [362,382,364,381,0,519],[371,404,375,395,1,509],[384,412,392,396,1,501],[376,392,380,386,0,521],
  [336,372,339,368,0,514],[325,356,330,337,1,507],[334,371,334,365,1,509],[330,370,345,356,1,505],
  [353,373,360,367,0,515],[358,392,360,389,1,509],[382,407,388,404,1,513],[370,394,370,380,0,521],
  [347,376,363,371,0,523],[333,361,334,355,0,515],[320,343,323,335,0,511],[314,331,321,327,1,517],
  [335,368,336,366,1,508],[277,305,282,303,1,498],[266,303,269,294,0,500],[258,290,275,286,1,509],
  [271,298,272,277,0,515],[267,283,272,272,0,517],[253,275,262,274,0,515],[255,266,259,259,0,519],
  [255,274,257,269,1,521],[259,273,261,272,0,523],[236,255,237,254,0,519],[208,234,209,232,0,511],
  [183,203,193,198,0,508],[185,202,187,187,0,513],[169,189,180,184,0,523],[170,183,171,182,0,519],
  [167,175,173,173,0,521],[163,178,163,171,0,515],[128,162,128,160,0,503],[122,147,131,136,1,508],
  [143,177,143,171,1,501],[149,192,153,172,0,507],[152,176,157,173,1,511],[155,176,167,167,0,517],
  [162,178,164,169,0,513],[162,175,166,171,1,521],[170,201,172,194,1,515]
];

const plot = document.getElementById('plot');
const TOP = 101;
const BASE = 536;
const STEP = 8;

function add(name, attrs) {
  const el = document.createElementNS(NS, name);
  for (const key in attrs) {
    el.setAttribute(key, attrs[key]);
  }
  plot.appendChild(el);
}

// Bid line and the chart shift mark
add('rect', { x: 0, y: 194 - TOP, width: '100%', height: 1, fill: '#778899' });
add('path', { d: 'M1175 0h10l-5 5z', fill: '#778899' });

candles.forEach(([high, low, top, bottom, falling, vol], i) => {
  const x = i * STEP;
  add('rect', { x, y: vol - TOP, width: 1, height: BASE - vol, fill: '#32cd32' });
  add('rect', { x, y: high - TOP, width: 1, height: low - high, fill: '#00ff00' });
  add('rect', { x: x - 2, y: top - TOP, width: 5, height: bottom - top + 1, fill: '#00ff00' });
  if (bottom - top > 1) {
    add('rect', { x: x - 1, y: top - TOP + 1, width: 3, height: bottom - top - 1, fill: falling ? '#fff' : '#000' });
  }
});
```
